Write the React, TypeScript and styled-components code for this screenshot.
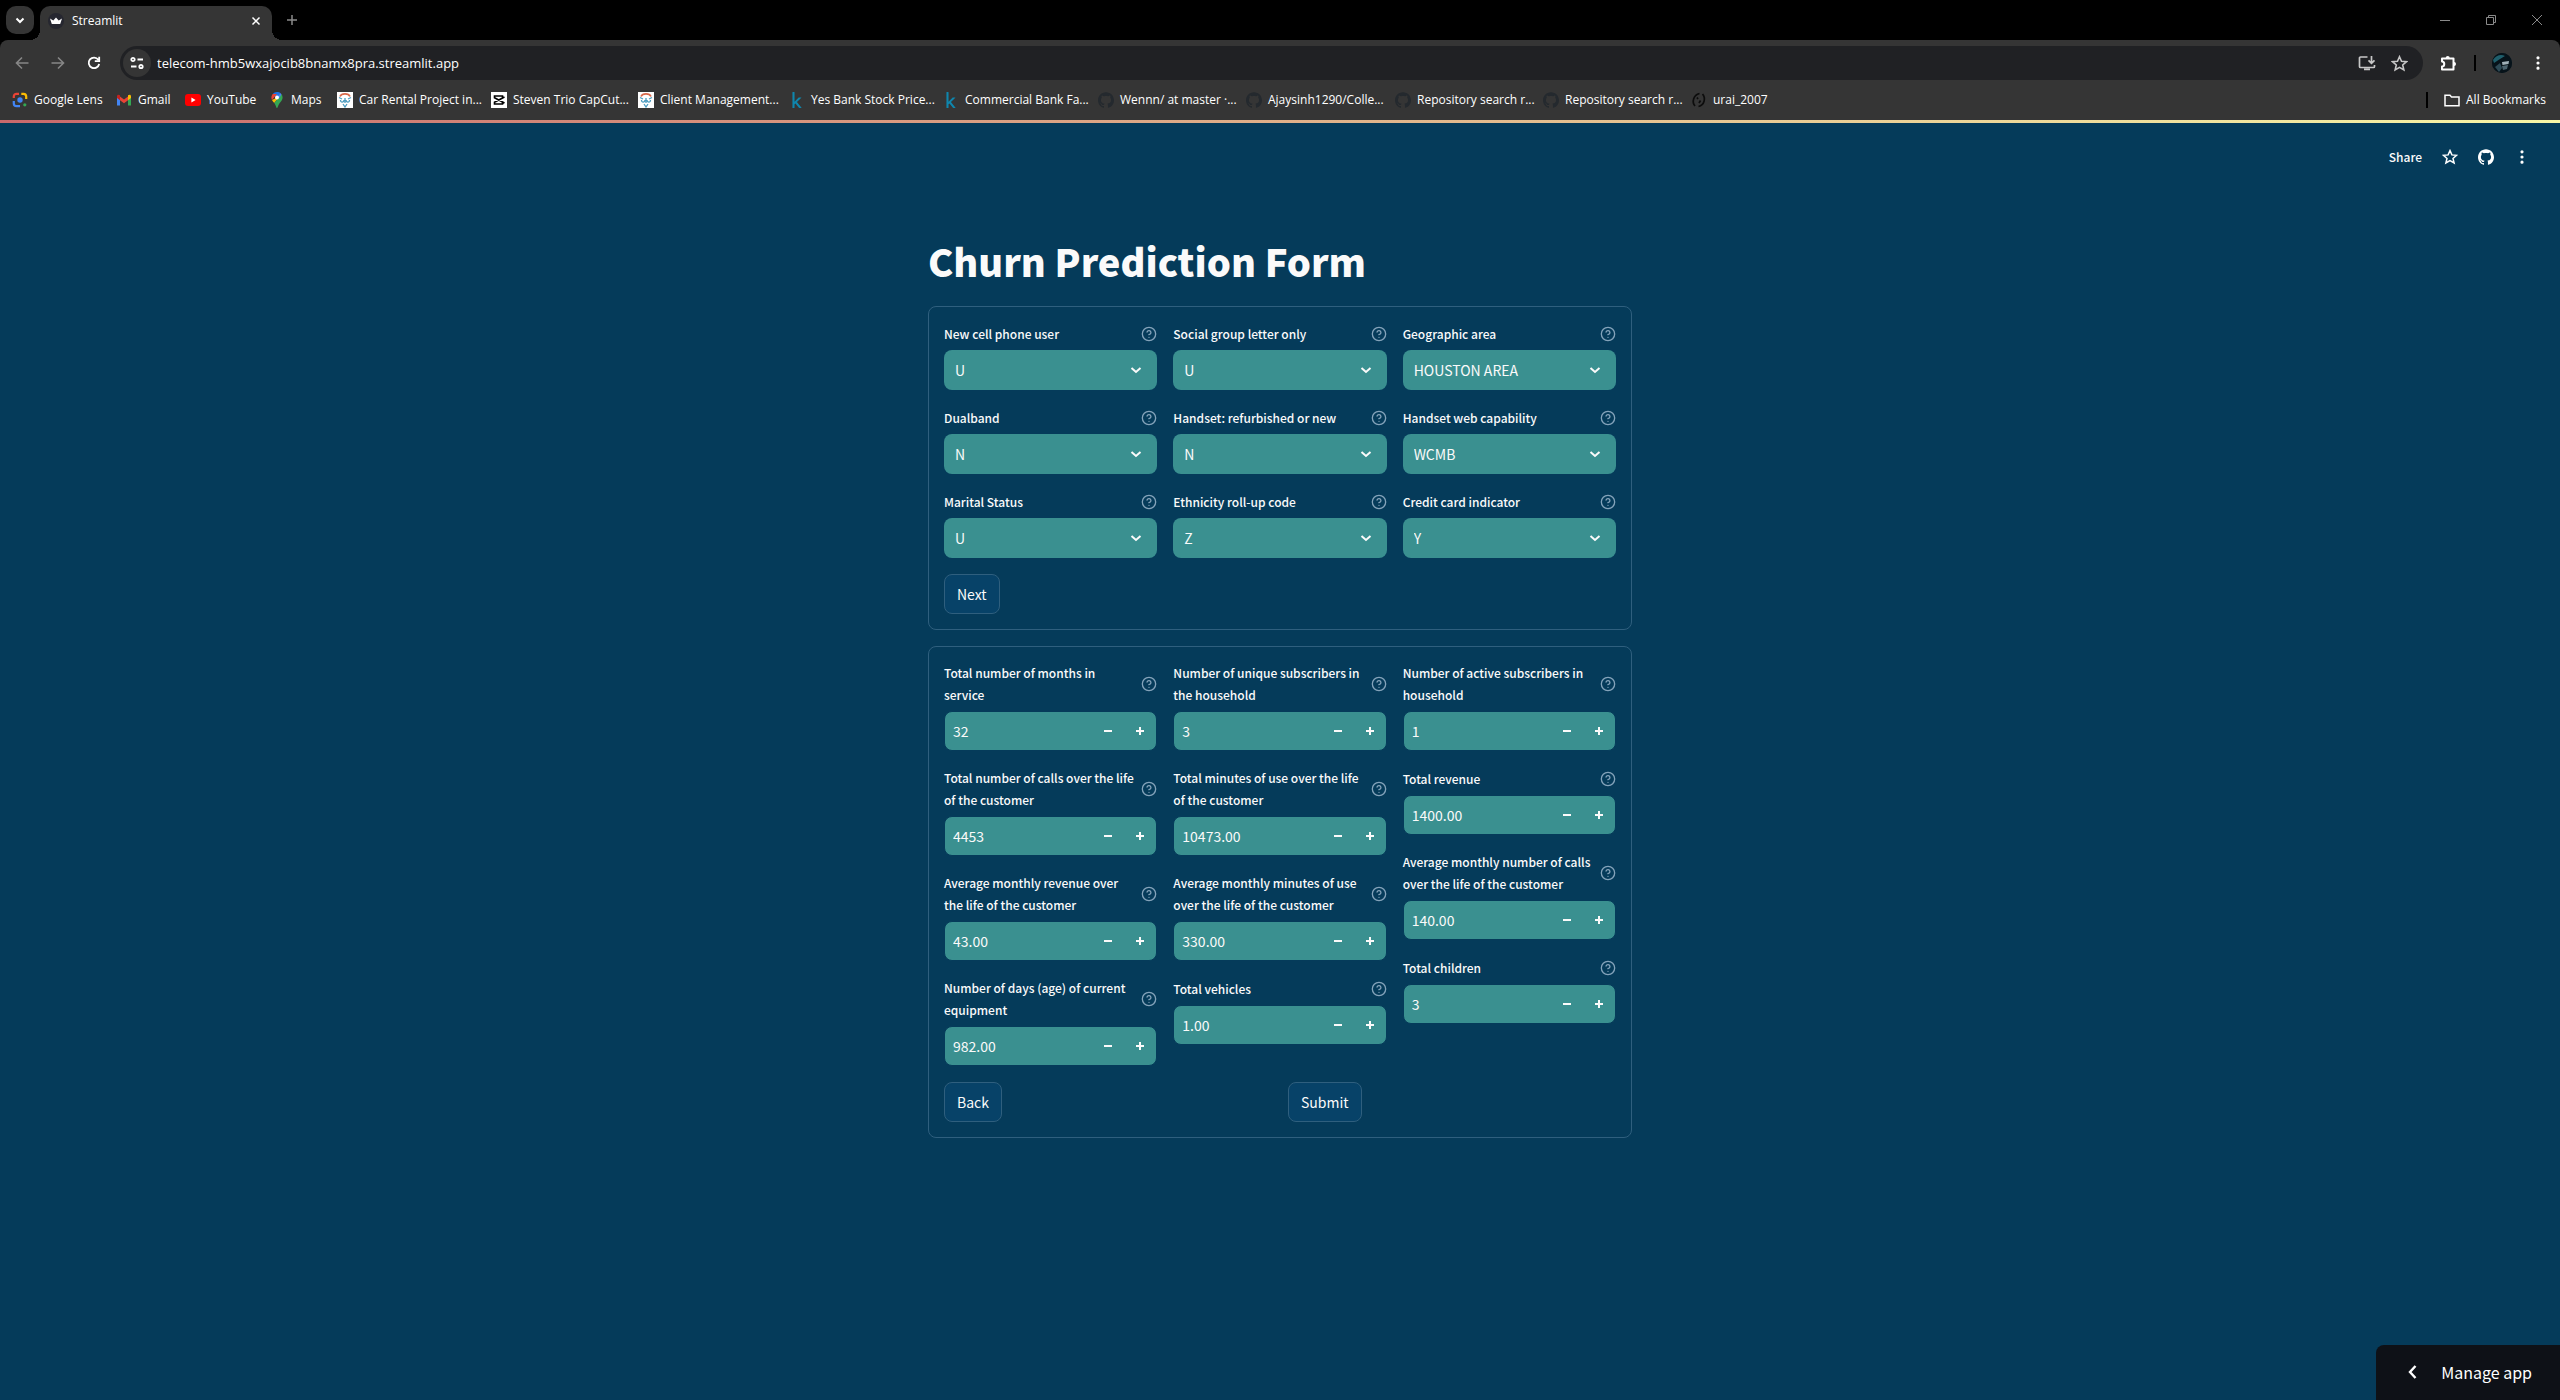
import React, { useId } from "react";
import styled, { createGlobalStyle } from "styled-components";
import { SiGithub } from "react-icons/si";
import { FaKaggle } from "react-icons/fa";

const APP_FONT = `"Noto Sans CJK SC", "Noto Sans", sans-serif`;
const UI_FONT = `"Open Sans", "Noto Sans", sans-serif`;

const GlobalStyle = createGlobalStyle`
  *, *::before, *::after { box-sizing: border-box; }
  body { margin: 0; background: #053b5a; color: #fafafa; font-family: ${APP_FONT}; }
  button, input, select { font: inherit; color: inherit; margin: 0; }
  button { cursor: pointer; }
  svg { display: block; flex: none; }
`;

const Page = styled.div`
  display: flex;
  flex-direction: column;
  min-height: 100vh;
`;

/* ---------- browser window ---------- */

const Chrome = styled.header`
  display: flex;
  flex-direction: column;
  background: #000;
  font-family: ${UI_FONT};
  font-size: 12px;
  color: #fff;
`;

const IconButton = styled.button<{ $size?: number; $bg?: string; $color?: string; $radius?: number }>`
  display: flex;
  align-items: center;
  justify-content: center;
  flex: none;
  width: ${(p) => p.$size ?? 28}px;
  height: ${(p) => p.$size ?? 28}px;
  padding: 0;
  border: 0;
  border-radius: ${(p) => p.$radius ?? 14}px;
  background: ${(p) => p.$bg ?? "transparent"};
  color: ${(p) => p.$color ?? "#fff"};
`;

const TabStrip = styled.div`
  display: flex;
  align-items: flex-start;
  height: 40px;
  padding: 6px 0 0 6px;
`;

const Tab = styled.div`
  position: relative;
  display: flex;
  align-items: center;
  gap: 8px;
  width: 232px;
  height: 34px;
  margin-left: 6px;
  padding: 0 6px 4px 8px;
  border-radius: 10px 10px 0 0;
  background: #353535;

  &::before, &::after {
    content: "";
    position: absolute;
    bottom: 0;
    width: 10px;
    height: 10px;
  }
  &::before { left: -10px; background: radial-gradient(circle at 0 0, transparent 10px, #353535 10px); }
  &::after { right: -10px; background: radial-gradient(circle at 100% 0, transparent 10px, #353535 10px); }
`;

const TabTitle = styled.span`
  flex: 1;
  line-height: 16px;
`;

const NewTab = styled(IconButton)`
  margin-left: 6px;
`;

const WindowControls = styled.div`
  display: flex;
  align-self: stretch;
  margin: -6px 0 0 auto;
`;

const WindowButton = styled.button`
  display: flex;
  align-items: center;
  justify-content: center;
  width: 46px;
  height: 40px;
  padding: 0;
  border: 0;
  background: transparent;
  color: #8a8a8a;
`;

const Toolbar = styled.div`
  display: flex;
  align-items: center;
  height: 46px;
  padding: 0 14px 0 8px;
  border-radius: 8px 8px 0 0;
  background: #353535;
`;

const NavButtons = styled.div`
  display: flex;
  gap: 8px;
  margin-right: 12px;
`;

const AddressBar = styled.label`
  display: flex;
  flex: 1;
  align-items: center;
  height: 34px;
  padding: 0 10px 0 3px;
  border-radius: 17px;
  background: #202124;
`;

const AddressInput = styled.input`
  flex: 1;
  min-width: 0;
  margin-left: 6px;
  padding: 0;
  border: 0;
  outline: 0;
  background: transparent;
  font-size: 13px;
  line-height: 20px;
`;

const AddressActions = styled.div`
  display: flex;
  gap: 4px;
`;

const ToolbarEnd = styled.div`
  display: flex;
  align-items: center;
  margin-left: 12px;
`;

const Divider = styled.span`
  width: 2px;
  height: 16px;
  background: #000;
`;

const Avatar = styled.button`
  width: 20px;
  height: 20px;
  margin: 0 18px 0 16px;
  padding: 0;
  border: 0;
  border-radius: 10px;
  overflow: hidden;
  background: #0b1c24;
`;

const Extensions = styled(IconButton)`
  margin-right: 11px;
`;

const BookmarkBar = styled.nav`
  display: flex;
  align-items: center;
  height: 34px;
  padding: 0 14px 6px 12px;
  background: #353535;
`;

const Bookmark = styled.a<{ $width?: number }>`
  display: flex;
  align-items: center;
  gap: 6px;
  flex: 0 0 ${(p) => (p.$width ? `${p.$width}px` : "auto")};
  color: #fff;
  text-decoration: none;
  line-height: 16px;
  white-space: nowrap;
`;

const AllBookmarks = styled.div`
  display: flex;
  align-items: center;
  gap: 16px;
  margin-left: auto;
`;

const Rainbow = styled.div`
  height: 3px;
  background: linear-gradient(90deg, #c9696c, #f8f6a6);
`;

/* ---------- app ---------- */

const AppShell = styled.div`
  display: flex;
  flex: 1;
  flex-direction: column;
`;

const AppToolbar = styled.div`
  display: flex;
  align-items: center;
  justify-content: flex-end;
  gap: 8px;
  padding: 20px 24px 0;
`;

const ShareButton = styled.button`
  height: 28px;
  padding: 0 6px;
  border: 0;
  background: transparent;
  font-size: 12px;
  font-weight: 500;
  line-height: 28px;
`;

const Main = styled.main`
  display: flex;
  flex: 1;
  flex-direction: column;
  gap: 16px;
  width: 100%;
  max-width: 736px;
  margin: 0 auto;
  padding: 60px 16px 0;
`;

const Title = styled.h1`
  margin: 0;
  padding: 4px 0 3px;
  font-size: 38px;
  font-weight: 900;
  line-height: 52px;
`;

const Card = styled.form`
  display: flex;
  flex-direction: column;
  gap: 16px;
  padding: 15px;
  border: 1px solid #2f5f7e;
  border-radius: 8px;
`;

const Columns = styled.div<{ $count: number }>`
  display: grid;
  grid-template-columns: repeat(${(p) => p.$count}, minmax(0, 1fr));
  gap: 16px;
`;

const Column = styled.div`
  display: flex;
  flex-direction: column;
  gap: 16px;
`;

const Field = styled.div`
  display: flex;
  flex-direction: column;
  gap: 4px;
`;

const LabelRow = styled.div`
  display: flex;
  align-items: center;
  justify-content: space-between;
  min-height: 24px;
  padding-bottom: 1px;
`;

const FieldLabel = styled.label`
  font-size: 12px;
  font-weight: 500;
  line-height: 22px;
  white-space: pre-line;
`;

const Help = styled.button`
  flex: none;
  padding: 0;
  border: 0;
  background: transparent;
  color: #84a3ba;
`;

const SelectWrap = styled.div`
  position: relative;
  height: 40px;

  svg {
    position: absolute;
    top: 12px;
    right: 13px;
    pointer-events: none;
  }
`;

const Select = styled.select`
  width: 100%;
  height: 40px;
  padding: 0 40px 0 11px;
  border: 0;
  border-radius: 8px;
  outline: 0;
  appearance: none;
  background: #3a9090;
  font-size: 14px;
  line-height: 22px;
`;

const NumberBox = styled.div`
  display: flex;
  height: 40px;
  overflow: hidden;
  border: 1px solid #053b5a;
  border-radius: 8px;
  background: #3a9090;
`;

const NumberInput = styled.input`
  flex: 1;
  min-width: 0;
  padding: 0 8px;
  border: 0;
  outline: 0;
  background: transparent;
  font-size: 14px;
  line-height: 22px;
`;

const StepButton = styled.button`
  display: flex;
  align-items: center;
  justify-content: center;
  width: 32px;
  padding: 0;
  border: 0;
  background: transparent;
`;

const FormButton = styled.button`
  justify-self: start;
  align-self: flex-start;
  height: 40px;
  padding: 0 12px;
  border: 1px solid #2f5f7e;
  border-radius: 8px;
  background: #074268;
  font-size: 14px;
  line-height: 26px;
`;

const ManageApp = styled.button`
  position: fixed;
  right: 0;
  bottom: 0;
  display: flex;
  align-items: center;
  gap: 20px;
  height: 55px;
  padding: 0 28px 2px 29px;
  border: 0;
  border-radius: 8px 0 0 0;
  background: #0e1117;
  color: #fff;
  font-size: 16px;
`;

/* ---------- drawings ---------- */

type Shape = { d: string; size?: number; box?: number; stroke?: number; fill?: boolean };

const Glyph = ({ d, size = 16, box = 16, stroke = 2, fill = false }: Shape) => (
  <svg width={size} height={size} viewBox={`0 0 ${box} ${box}`} fill={fill ? "currentColor" : "none"}
    stroke={fill ? "none" : "currentColor"} strokeWidth={stroke} aria-hidden="true">
    <path d={d} />
  </svg>
);

const STAR = "M8 1.6l1.9 4.3 4.7.4-3.6 3.1 1.1 4.6L8 11.6 3.9 14 5 9.4 1.4 6.3l4.7-.4z";
const DOTS = "M8 1.2a1.6 1.6 0 110 3.2 1.6 1.6 0 010-3.2zm0 5.2a1.6 1.6 0 110 3.2 1.6 1.6 0 010-3.2zm0 5.2a1.6 1.6 0 110 3.2 1.6 1.6 0 010-3.2z";

const HelpIcon = () => (
  <svg width="16" height="16" viewBox="0 0 24 24" fill="none" stroke="currentColor" strokeWidth="2" strokeLinecap="round" strokeLinejoin="round" aria-hidden="true">
    <circle cx="12" cy="12" r="10" />
    <path d="M9.09 9a3 3 0 0 1 5.83 1c0 2-3 3-3 3" />
    <path d="M12 17h.01" />
  </svg>
);

const PuzzleIcon = () => (
  <svg width="18" height="18" viewBox="0 0 18 18" aria-hidden="true">
    <path d="M2 7.500V4.500h11.500v11H2v-3c3 0 3-5 0-5z" fill="none" stroke="currentColor" strokeWidth="2" strokeLinejoin="round" />
    <path d="M5.700 4a2 2 0 014 0zM14 8a2 2 0 010 4z" fill="currentColor" />
  </svg>
);

const LensIcon = () => (
  <svg width="16" height="16" viewBox="0 0 16 16" fill="none" strokeWidth="2.2" aria-hidden="true">
    <path d="M1.8 6V4.5A2.7 2.7 0 014.5 1.8H7" stroke="#ea4335" />
    <path d="M9.3 1.8h2.2a2.7 2.7 0 012.7 2.7V7" stroke="#fbbc04" />
    <path d="M1.8 9v2.5a2.7 2.7 0 002.7 2.7H8" stroke="#4285f4" />
    <circle cx="8" cy="8" r="2.7" fill="#4285f4" />
    <circle cx="12.8" cy="12.8" r="1.6" fill="#34a853" />
  </svg>
);

const GmailIcon = () => (
  <svg width="16" height="16" viewBox="0 0 16 16" aria-hidden="true">
    <path d="M1 4v9.500h3V7z" fill="#4285f4" />
    <path d="M15 4v9.500h-3V7z" fill="#34a853" />
    <path d="M4 4.6l4 3 4-3V8.300l-4 3-4-3z" fill="#ea4335" />
    <path d="M1 4.300c0-1.700 1.500-2 3-1v5L1 6z" fill="#c5221f" />
    <path d="M15 4.300c0-1.700-1.500-2-3-1v5L15 6z" fill="#fbbc04" />
  </svg>
);

const YouTubeIcon = () => (
  <svg width="16" height="16" viewBox="0 0 16 16" aria-hidden="true">
    <rect y="2" width="16" height="12" rx="3" fill="#f00" />
    <path d="M6.400 5.600L10.600 8l-4.200 2.400z" fill="#fff" />
  </svg>
);

const MapsIcon = () => (
  <svg width="16" height="16" viewBox="0 0 16 16" aria-hidden="true">
    <path d="M8 0a5.600 5.600 0 00-4.300 2L8 5.600 11.400.9A5.600 5.600 0 008 0z" fill="#1a73e8" />
    <path d="M3.700 2A5.600 5.600 0 003 8l5-6z" fill="#ea4335" />
    <path d="M3 8c.5 1 1.300 1.900 2.200 3L12.500 2.300 8 5.600z" fill="#fbbc04" />
    <path d="M12.500 2.300L5.200 11C7 13.200 7.200 16 8 16s.9-2.600 2.600-4.800C12.200 9.300 13.600 8 13.600 5.600c0-1.200-.4-2.400-1.100-3.300z" fill="#34a853" />
    <path d="M11.400.9L8 5l2.300 1.200 2.200-3.900A5 5 0 0011.400.9z" fill="#4285f4" />
    <circle cx="8" cy="5.600" r="2" fill="#fff" />
  </svg>
);

const CarIcon = () => (
  <svg width="16" height="16" viewBox="0 0 16 16" fill="none" aria-hidden="true">
    <path d="M0 0h16v16H0z" fill="#fff" />
    <path d="M3 4.500C4.500 1 11.500 1 13 4.500" stroke="#d9694b" strokeWidth="1.600" />
    <path d="M2 5.500l3 1.500M14 5.500L11 7M3.500 8c0 3 3.500 2.500 3.500 0M9 8c0 2.500 3.500 3 3.500 0M6 12l2 3 2-3M8 6v5" stroke="#4c9cc0" strokeWidth="1.300" />
  </svg>
);

const CapCutIcon = () => (
  <svg width="16" height="16" viewBox="0 0 16 16" fill="none" aria-hidden="true">
    <path d="M0 0h16v16H0z" fill="#fff" />
    <path d="M3.500 6V4H11.500V6M3.500 10V12H11.500V10M3 5.500L13.500 11M3 10.500L13.500 5" stroke="#000" strokeWidth="1.600" />
  </svg>
);

const ScribbleIcon = () => (
  <svg width="16" height="16" viewBox="0 0 16 16" fill="none" stroke="#0c0c0c" strokeWidth="1.700" aria-hidden="true">
    <path d="M8.500 1.500C2.500 3 .5 10 4 14M7.500 14.500c6-1.500 7.500-8.500 4-12.500" />
    <path d="M6 5.500l1 1.500M9.500 8.500L8 11" />
  </svg>
);

const CrownIcon = () => (
  <svg width="16" height="16" viewBox="0 0 16 16" aria-hidden="true">
    <circle cx="8" cy="8" r="8" fill="#262730" />
    <path d="M2 5.500l3.300 2L8 4.500l2.700 3 3.300-2L12.200 11H3.800z" fill="#fff" />
  </svg>
);

const Kaggle = () => <FaKaggle size={16} color="#0f86ad" />;
const DimGithub = () => <SiGithub size={16} color="#24292e" />;

const bookmarks: { text: string; width: number; Icon: () => React.ReactElement }[] = [
  { text: "Google Lens", width: 104, Icon: LensIcon },
  { text: "Gmail", width: 69, Icon: GmailIcon },
  { text: "YouTube", width: 84, Icon: YouTubeIcon },
  { text: "Maps", width: 68, Icon: MapsIcon },
  { text: "Car Rental Project in...", width: 154, Icon: CarIcon },
  { text: "Steven Trio CapCut...", width: 147, Icon: CapCutIcon },
  { text: "Client Management...", width: 151, Icon: CarIcon },
  { text: "Yes Bank Stock Price...", width: 154, Icon: Kaggle },
  { text: "Commercial Bank Fa...", width: 155, Icon: Kaggle },
  { text: "Wennn/ at master ·...", width: 148, Icon: DimGithub },
  { text: "Ajaysinh1290/Colle...", width: 149, Icon: DimGithub },
  { text: "Repository search r...", width: 148, Icon: DimGithub },
  { text: "Repository search r...", width: 148, Icon: DimGithub },
  { text: "urai_2007", width: 80, Icon: ScribbleIcon },
];

/* ---------- form data ---------- */

type Item = [label: string, value: string];

const selectColumns: Item[][] = [
  [["New cell phone user", "U"], ["Dualband", "N"], ["Marital Status", "U"]],
  [["Social group letter only", "U"], ["Handset: refurbished or new", "N"], ["Ethnicity roll-up code", "Z"]],
  [["Geographic area", "HOUSTON AREA"], ["Handset web capability", "WCMB"], ["Credit card indicator", "Y"]],
];

const numberColumns: Item[][] = [
  [
    ["Total number of months in\nservice", "32"],
    ["Total number of calls over the life\nof the customer", "4453"],
    ["Average monthly revenue over\nthe life of the customer", "43.00"],
    ["Number of days (age) of current\nequipment", "982.00"],
  ],
  [
    ["Number of unique subscribers in\nthe household", "3"],
    ["Total minutes of use over the life\nof the customer", "10473.00"],
    ["Average monthly minutes of use\nover the life of the customer", "330.00"],
    ["Total vehicles", "1.00"],
  ],
  [
    ["Number of active subscribers in\nhousehold", "1"],
    ["Total revenue", "1400.00"],
    ["Average monthly number of calls\nover the life of the customer", "140.00"],
    ["Total children", "3"],
  ],
];

const FieldHeader = ({ id, label }: { id: string; label: string }) => (
  <LabelRow>
    <FieldLabel htmlFor={id}>{label}</FieldLabel>
    <Help type="button" aria-label="Help"><HelpIcon /></Help>
  </LabelRow>
);

const SelectField = ({ label, value }: { label: string; value: string }) => {
  const id = useId();
  return (
    <Field>
      <FieldHeader id={id} label={label} />
      <SelectWrap>
        <Select id={id} defaultValue={value}><option>{value}</option></Select>
        <Glyph d="M3.500 6L8 10l4.500-4" />
      </SelectWrap>
    </Field>
  );
};

const NumberField = ({ label, value }: { label: string; value: string }) => {
  const id = useId();
  return (
    <Field>
      <FieldHeader id={id} label={label} />
      <NumberBox>
        <NumberInput id={id} inputMode="decimal" defaultValue={value} />
        <StepButton type="button" aria-label="Decrease"><Glyph size={8} box={8} d="M0 4h8" /></StepButton>
        <StepButton type="button" aria-label="Increase"><Glyph size={8} box={8} d="M0 4h8M4 0v8" /></StepButton>
      </NumberBox>
    </Field>
  );
};

const BrowserChrome = () => (
  <Chrome>
    <TabStrip>
      <IconButton $bg="#353535" $radius={10} aria-label="Search tabs"><Glyph d="M4.500 6.500L8 10l3.500-3.500" /></IconButton>
      <Tab>
        <CrownIcon />
        <TabTitle>Streamlit</TabTitle>
        <IconButton $size={20} aria-label="Close tab"><Glyph stroke={1.5} d="M4.500 4.500l7 7M11.500 4.500l-7 7" /></IconButton>
      </Tab>
      <NewTab $color="#8a8a8a" aria-label="New tab"><Glyph stroke={1.5} d="M3 8h10M8 3v10" /></NewTab>
      <WindowControls>
        <WindowButton aria-label="Minimize"><Glyph stroke={1} d="M3 8.500h10" /></WindowButton>
        <WindowButton aria-label="Restore"><Glyph stroke={1} d="M3.500 5.500h7v7h-7zM5.500 5.500v-2h7v7h-2" /></WindowButton>
        <WindowButton aria-label="Close window"><Glyph stroke={1} d="M3 3l10 10M13 3L3 13" /></WindowButton>
      </WindowControls>
    </TabStrip>
    <Toolbar>
      <NavButtons>
        <IconButton $color="#868686" aria-label="Back"><Glyph stroke={1.6} d="M14.500 8H3M8 2.500L2.500 8 8 13.500" /></IconButton>
        <IconButton $color="#868686" aria-label="Forward"><Glyph stroke={1.6} d="M1.500 8H13M8 2.500L13.500 8 8 13.500" /></IconButton>
        <IconButton aria-label="Reload"><Glyph d="M12.300 4.700A5.300 5.300 0 1013.200 9M13.200 1.800v4.400H8.800" stroke={1.8} /></IconButton>
      </NavButtons>
      <AddressBar>
        <IconButton as="span" $bg="#353535">
          <Glyph stroke={1.8} d="M2.300 4.500a1.700 1.700 0 103.400 0 1.700 1.700 0 10-3.400 0M8.500 4.500H14M2 11.500h5.500M10.300 11.500a1.700 1.700 0 103.400 0 1.700 1.700 0 10-3.400 0" />
        </IconButton>
        <AddressInput aria-label="Address" defaultValue="telecom-hmb5wxajocib8bnamx8pra.streamlit.app" />
        <AddressActions>
          <IconButton $color="#c7c7c7" aria-label="Install app"><Glyph size={18} box={18} stroke={1.7} d="M9.500 3H2.500a1 1 0 00-1 1v8.500a1 1 0 001 1h13a1 1 0 001-1V11M6 15.300h6M13.500 2v7M10.500 6.300l3 3 3-3" /></IconButton>
          <IconButton $color="#c7c7c7" aria-label="Bookmark this tab"><Glyph d={STAR} size={17} stroke={1.5} /></IconButton>
        </AddressActions>
      </AddressBar>
      <ToolbarEnd>
        <Extensions aria-label="Extensions"><PuzzleIcon /></Extensions>
        <Divider />
        <Avatar aria-label="Profile">
          <svg width="20" height="20" viewBox="0 0 20 20" aria-hidden="true">
            <path d="M0 0h20v20H0z" fill="#07131a" />
            <path d="M1 7C4 2 9 1 13 3L8 6 2 10z" fill="#1f5f6c" />
            <path d="M10 9l7-1-.5 3-6 1z" fill="#9fb0b8" />
            <path d="M10 13l6-1-1 4-4 1z" fill="#4a626d" />
            <path d="M3 14l5-4 2 5-3 4z" fill="#2d4a56" />
          </svg>
        </Avatar>
        <IconButton $size={16} aria-label="Browser menu"><Glyph d={DOTS} fill /></IconButton>
      </ToolbarEnd>
    </Toolbar>
    <BookmarkBar aria-label="Bookmarks">
      {bookmarks.map(({ text, width, Icon }, i) => (
        <Bookmark key={i} href="#" $width={width}><Icon />{text}</Bookmark>
      ))}
      <AllBookmarks>
        <Divider />
        <Bookmark href="#">
          <Glyph stroke={1.5} d="M1 3.300h5l1.500 1.700H15v8.700H1z" />All Bookmarks
        </Bookmark>
      </AllBookmarks>
    </BookmarkBar>
    <Rainbow />
  </Chrome>
);

export default function App() {
  return (
    <Page>
      <GlobalStyle />
      <BrowserChrome />
      <AppShell>
        <AppToolbar>
          <ShareButton>Share</ShareButton>
          <IconButton aria-label="Favorite"><Glyph d={STAR} stroke={1.5} /></IconButton>
          <IconButton aria-label="View source"><SiGithub size={16} /></IconButton>
          <IconButton aria-label="App menu"><Glyph d={DOTS} fill /></IconButton>
        </AppToolbar>
        <Main>
          <Title>Churn Prediction Form</Title>
          <Card onSubmit={(e) => e.preventDefault()}>
            <Columns $count={3}>
              {selectColumns.map((column, i) => (
                <Column key={i}>
                  {column.map(([label, value]) => <SelectField key={label} label={label} value={value} />)}
                </Column>
              ))}
            </Columns>
            <FormButton type="button">Next</FormButton>
          </Card>
          <Card onSubmit={(e) => e.preventDefault()}>
            <Columns $count={3}>
              {numberColumns.map((column, i) => (
                <Column key={i}>
                  {column.map(([label, value]) => <NumberField key={label} label={label} value={value} />)}
                </Column>
              ))}
            </Columns>
            <Columns $count={2}>
              <FormButton type="button">Back</FormButton>
              <FormButton type="submit">Submit</FormButton>
            </Columns>
          </Card>
        </Main>
      </AppShell>
      <ManageApp><Glyph d="M10.500 2L5 8l5.500 6" stroke={2.4} />Manage app</ManageApp>
    </Page>
  );
}
